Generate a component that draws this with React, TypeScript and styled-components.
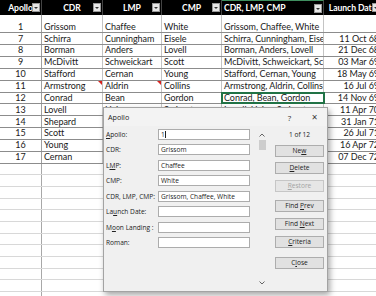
import React from "react";
import styled, { createGlobalStyle, css } from "styled-components";

const GlobalStyle = createGlobalStyle`
  html, body { margin: 0; padding: 0; background: #fff; }
  body { width: 376px; height: 296px; overflow: hidden; }
`;

const COLS = "42px 61px 59px 60px 102px 58px";

type Align = "left" | "center" | "right";

const Sheet = styled.div`
  position: relative;
  width: 376px;
  height: 296px;
  overflow: hidden;
  font-family: Lato, "Liberation Sans", sans-serif;
  font-size: 9px;
  letter-spacing: -0.05px;
  color: #1a1a1a;
  background: #fff;
`;

const Grid = styled.div`
  display: flex;
  flex-direction: column;
  width: 382px;
`;

const HeaderRow = styled.div`
  display: grid;
  grid-template-columns: ${COLS};
  height: 15px;
  background: #000;
`;

const HeaderCell = styled.div<{ $align: Align; $selected?: boolean }>`
  position: relative;
  display: flex;
  align-items: center;
  justify-content: ${(p) => (p.$align === "left" ? "flex-start" : "center")};
  padding-left: ${(p) => (p.$align === "left" ? "2px" : "0")};
  color: #fff;
  font-weight: 700;
  font-size: 8.6px;
  white-space: nowrap;
  overflow: hidden;
  box-sizing: border-box;
  border-right: 1px solid #444;
  border-top: ${(p) => (p.$selected ? "1px solid #3f8f5f" : "none")};
`;

const FilterButton = styled.span`
  position: absolute;
  right: 1px;
  top: 3px;
  width: 8px;
  height: 9px;
  box-sizing: border-box;
  background: #e6e6e6;
  border: 1px solid #999;
  display: flex;
  align-items: center;
  justify-content: center;
  &::after {
    content: "";
    border-left: 2px solid transparent;
    border-right: 2px solid transparent;
    border-top: 2.5px solid #333;
  }
`;

const DataRow = styled.div<{ $h: number; $empty?: boolean }>`
  display: grid;
  grid-template-columns: ${COLS};
  height: ${(p) => p.$h}px;
  box-sizing: border-box;
  border-bottom: 1px solid ${(p) => (p.$empty ? "#d8d8d8" : "#8c8c8c")};
`;

const Cell = styled.div<{ $align: Align; $line?: string; $active?: boolean }>`
  position: relative;
  display: flex;
  align-items: flex-end;
  justify-content: ${(p) =>
    p.$align === "center" ? "center" : p.$align === "right" ? "flex-end" : "flex-start"};
  padding: 0 2px 0.5px;
  white-space: nowrap;
  overflow: hidden;
  line-height: 11px;
  box-sizing: border-box;
  border-right: 1px solid ${(p) => p.$line ?? "#c4c4c4"};
  ${(p) =>
    p.$active &&
    css`
      outline: 2px solid #217346;
      outline-offset: -1px;
      z-index: 1;
    `}
`;

const CommentMark = styled.span`
  position: absolute;
  top: 0;
  right: 0;
  width: 0;
  height: 0;
  border-top: 4px solid #d9231f;
  border-left: 4px solid transparent;
`;

/* ---------- dialog ---------- */

const Dialog = styled.div`
  position: absolute;
  left: 103px;
  top: 107px;
  width: 225px;
  height: 185px;
  box-sizing: border-box;
  background: #f0f0f0;
  border: 1px solid #a3a3a3;
  box-shadow: 2px 3px 6px rgba(0, 0, 0, 0.35);
  font-family: "Open Sans", "Noto Sans", sans-serif;
  font-size: 6.6px;
  letter-spacing: 0;
  color: #222;
  display: flex;
  flex-direction: column;
  z-index: 5;
`;

const TitleBar = styled.div`
  height: 18px;
  display: flex;
  align-items: center;
  padding-left: 4px;
  background: #f3f3f3;
`;

const Title = styled.span`
  flex: 1;
  font-size: 7.2px;
`;

const TitleButton = styled.span<{ $big?: boolean }>`
  width: 25px;
  text-align: center;
  font-size: ${(p) => (p.$big ? "10px" : "8px")};
  color: #333;
`;

const Body = styled.div`
  flex: 1;
  display: flex;
  padding-top: 2.5px;
`;

const FieldColumn = styled.div`
  width: 148px;
  box-sizing: border-box;
  padding-left: 2px;
  display: flex;
  flex-direction: column;
  gap: 4.5px;
`;

const FieldRow = styled.div`
  display: flex;
  align-items: center;
  height: 11px;
`;

const Label = styled.span`
  width: 52px;
  white-space: nowrap;
`;

const Key = styled.span`
  text-decoration: underline;
`;

const Input = styled.div`
  width: 92px;
  height: 11px;
  box-sizing: border-box;
  background: #fff;
  border: 1px solid #acacac;
  padding-left: 2px;
  line-height: 9px;
  white-space: nowrap;
  overflow: hidden;
  display: flex;
  align-items: center;
`;

const Caret = styled.span`
  display: inline-block;
  width: 1px;
  height: 7px;
  background: #222;
  margin-left: 0.5px;
`;

const ScrollColumn = styled.div`
  width: 19px;
  display: flex;
  flex-direction: column;
  align-items: center;
  padding: 4px 0 6px;
  box-sizing: border-box;
`;

const Thumb = styled.div`
  width: 7px;
  height: 10px;
  background: #cdcdcd;
  margin-top: 3px;
  margin-left: 2px;
`;

const Spacer = styled.div`
  flex: 1;
`;

const ButtonColumn = styled.div`
  flex: 1;
  padding-left: 4px;
  display: flex;
  flex-direction: column;
`;

const Counter = styled.div`
  width: 49px;
  height: 11px;
  text-align: center;
  line-height: 11px;
  margin-bottom: 5px;
`;

const Button = styled.div<{ $disabled?: boolean; $gap?: number }>`
  width: 49px;
  height: 12px;
  box-sizing: border-box;
  margin-top: ${(p) => p.$gap ?? 5.5}px;
  background: ${(p) => (p.$disabled ? "#e6e6e6" : "#e1e1e1")};
  border: 1px solid ${(p) => (p.$disabled ? "#c6c6c6" : "#adadad")};
  color: ${(p) => (p.$disabled ? "#a3a3a3" : "#222")};
  text-align: center;
  line-height: 10px;
  white-space: nowrap;
`;

const Chevron = ({ up }: { up?: boolean }) => (
  <svg width="6" height="4" viewBox="0 0 6 4">
    <path
      d={up ? "M0.5 3.5 L3 1 L5.5 3.5" : "M0.5 0.5 L3 3 L5.5 0.5"}
      fill="none"
      stroke="#555"
      strokeWidth="0.9"
    />
  </svg>
);

const rows: string[][] = [
  ["1", "Grissom", "Chaffee", "White", "Grissom, Chaffee, White", ""],
  ["7", "Schirra", "Cunningham", "Eisele", "Schirra, Cunningham, Eisele", "11 Oct 68"],
  ["8", "Borman", "Anders", "Lovell", "Borman, Anders, Lovell", "21 Dec 68"],
  ["9", "McDivitt", "Schweickart", "Scott", "McDivitt, Schweickart, Scott", "03 Mar 69"],
  ["10", "Stafford", "Cernan", "Young", "Stafford, Cernan, Young", "18 May 69"],
  ["11", "Armstrong", "Aldrin", "Collins", "Armstrong, Aldrin, Collins", "16 Jul 69"],
  ["12", "Conrad", "Bean", "Gordon", "Conrad, Bean, Gordon", "14 Nov 69"],
  ["13", "Lovell", "Haise", "Swigert", "Lovell, Haise, Swigert", "11 Apr 70"],
  ["14", "Shepard", "Mitchell", "Roosa", "Shepard, Mitchell, Roosa", "31 Jan 71"],
  ["15", "Scott", "Irwin", "Worden", "Scott, Irwin, Worden", "26 Jul 71"],
  ["16", "Young", "Duke", "Mattingly", "Young, Duke, Mattingly", "16 Apr 72"],
  ["17", "Cernan", "Schmitt", "Evans", "Cernan, Schmitt, Evans", "07 Dec 72"],
];

const headers: { label: string; align: Align }[] = [
  { label: "Apollo", align: "center" },
  { label: "CDR", align: "center" },
  { label: "LMP", align: "center" },
  { label: "CMP", align: "center" },
  { label: "CDR, LMP, CMP", align: "left" },
  { label: "Launch Date", align: "center" },
];

const aligns: Align[] = ["center", "left", "left", "left", "left", "right"];

const fields: { pre: string; key: string; post: string; value: React.ReactNode }[] = [
  { pre: "", key: "A", post: "pollo:", value: <>1<Caret /></> },
  { pre: "CDR:", key: "", post: "", value: "Grissom" },
  { pre: "L", key: "M", post: "P:", value: "Chaffee" },
  { pre: "CMP:", key: "", post: "", value: "White" },
  { pre: "CDR, LMP, CMP:", key: "", post: "", value: "Grissom, Chaffee, White" },
  { pre: "La", key: "u", post: "nch Date:", value: "" },
  { pre: "M", key: "o", post: "on Landing :", value: "" },
  { pre: "Roman:", key: "", post: "", value: "" },
];

export default function App() {
  const emptyRows = Array.from({ length: 12 });
  return (
    <>
      <GlobalStyle />
      <Sheet>
        <Grid>
          <HeaderRow>
            {headers.map((h, i) => (
              <HeaderCell key={h.label} $align={h.align} $selected={i === 4}>
                {h.label}
                <FilterButton />
              </HeaderCell>
            ))}
          </HeaderRow>
          {rows.map((r, ri) => (
            <DataRow key={r[0]} $h={ri === 0 ? 18.3 : 11.85}>
              {r.map((v, ci) => (
                <Cell
                  key={ci}
                  $align={aligns[ci]}
                  $line={ci === 0 ? "#a0a0a0" : undefined}
                  $active={r[0] === "12" && ci === 4}
                >
                  {v}
                  {r[0] === "11" && (ci === 1 || ci === 2) && <CommentMark />}
                </Cell>
              ))}
            </DataRow>
          ))}
          {emptyRows.map((_, i) => (
            <DataRow key={`e${i}`} $h={11.7} $empty>
              <Cell $align="center" $line="#a8a8a8" />
              <Cell $align="left" $line="transparent" />
              <Cell $align="left" $line="transparent" />
              <Cell $align="left" $line="transparent" />
              <Cell $align="left" $line="transparent" />
              <Cell $align="right" $line="transparent" />
            </DataRow>
          ))}
        </Grid>

        <Dialog>
          <TitleBar>
            <Title>Apollo</Title>
            <TitleButton>?</TitleButton>
            <TitleButton $big>×</TitleButton>
          </TitleBar>
          <Body>
            <FieldColumn>
              {fields.map((f, i) => (
                <FieldRow key={i}>
                  <Label>
                    {f.pre}
                    {f.key && <Key>{f.key}</Key>}
                    {f.post}
                  </Label>
                  <Input>{f.value}</Input>
                </FieldRow>
              ))}
            </FieldColumn>
            <ScrollColumn>
              <Chevron up />
              <Thumb />
              <Spacer />
              <Chevron />
            </ScrollColumn>
            <ButtonColumn>
              <Counter>1 of 12</Counter>
              <Button $gap={0}>
                Ne<Key>w</Key>
              </Button>
              <Button>
                <Key>D</Key>elete
              </Button>
              <Button $disabled>
                <Key>R</Key>estore
              </Button>
              <Button $gap={8}>
                Find <Key>P</Key>rev
              </Button>
              <Button $gap={6}>
                Find <Key>N</Key>ext
              </Button>
              <Button $gap={6}>
                <Key>C</Key>riteria
              </Button>
              <Button $gap={9}>
                C<Key>l</Key>ose
              </Button>
            </ButtonColumn>
          </Body>
        </Dialog>
      </Sheet>
    </>
  );
}
